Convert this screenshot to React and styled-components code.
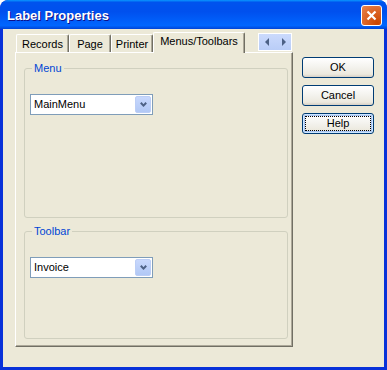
import React from "react";
import styled, { createGlobalStyle } from "styled-components";

const Global = createGlobalStyle`
  html, body { margin: 0; padding: 0; background: #ffffff; }
  body { font-family: "Liberation Sans", Arial, sans-serif; font-size: 11px; }
`;

const Window = styled.div`
  width: 387px;
  height: 370px;
  box-sizing: border-box;
  display: flex;
  flex-direction: column;
  background: #0831d9;
  border-radius: 8px 8px 0 0;
  overflow: hidden;
`;

const TitleBar = styled.div`
  height: 29px;
  flex: none;
  display: flex;
  align-items: center;
  padding: 1px 5px 0 7px;
  box-sizing: border-box;
  background: linear-gradient(
    to bottom,
    #0997ff 0%,
    #0053ee 8%,
    #0050ee 40%,
    #0066ff 88%,
    #0044d6 100%
  );
  border-radius: 8px 8px 0 0;
`;

const Title = styled.div`
  flex: 1;
  color: #ffffff;
  font-family: "Liberation Sans", Arial, sans-serif;
  font-weight: bold;
  font-size: 13px;
  text-shadow: 1px 1px #0f1089;
`;

const CloseButton = styled.div`
  width: 21px;
  height: 21px;
  box-sizing: border-box;
  margin-top: 1px;
  border: 1px solid #ffffff;
  border-radius: 3px;
  background: radial-gradient(circle at 80% 90%, #cc4600 0%, #dc6527 55%, #e8854f 100%);
  display: flex;
  align-items: center;
  justify-content: center;
`;

const Body = styled.div`
  flex: 1;
  margin: 0 3px 3px 3px;
  background: #ece9d8;
  display: flex;
  align-items: flex-start;
  padding: 3px 0 0 12px;
`;

const TabControl = styled.div`
  width: 278px;
  display: flex;
  flex-direction: column;
`;

const TabStrip = styled.div`
  height: 20px;
  display: flex;
  align-items: flex-end;
  padding-left: 1px;
`;

const Tab = styled.div`
  position: relative;
  box-sizing: border-box;
  width: ${(p) => p.$w}px;
  height: ${(p) => (p.$active ? 21 : 18)}px;
  margin-bottom: ${(p) => (p.$active ? -1 : 0)}px;
  z-index: ${(p) => (p.$active ? 2 : 1)};
  padding-top: ${(p) => (p.$active ? 2 : 3)}px;
  text-align: center;
  line-height: 13px;
  color: #000;
  background: #ece9d8;
  border-top: 1px solid #ffffff;
  border-left: 1px solid #ffffff;
  border-right: 1px solid #716f64;
  box-shadow: inset -1px 0 #aca899;
  border-radius: 2px 2px 0 0;
  white-space: nowrap;
`;

const ArrowBox = styled.div`
  margin-left: auto;
  margin-right: 1px;
  align-self: flex-start;
  margin-top: 1px;
  width: 34px;
  height: 18px;
  box-sizing: border-box;
  border: 1px solid #ffffff;
  display: flex;
`;

const ArrowHalf = styled.div`
  flex: 1;
  background: linear-gradient(to bottom, #cbdafc, #b9cdf7);
  display: flex;
  align-items: center;
  justify-content: center;
`;

const Panel = styled.div`
  position: relative;
  z-index: 1;
  height: 295px;
  box-sizing: border-box;
  background: #ece9d8;
  border-top: 1px solid #ffffff;
  border-left: 1px solid #ffffff;
  border-right: 1px solid #716f64;
  border-bottom: 1px solid #716f64;
  box-shadow: inset -1px -1px #aca899;
  padding: 15px 4px 0 8px;
  display: flex;
  flex-direction: column;
  gap: 13px;
`;

const GroupBox = styled.div`
  position: relative;
  height: ${(p) => p.$h}px;
  box-sizing: border-box;
  border: 1px solid #d0d0bf;
  border-radius: 3px;
  padding: 25px 0 0 5px;
`;

const GroupLabel = styled.span`
  position: absolute;
  top: -7px;
  left: 7px;
  padding: 0 2px;
  line-height: 13px;
  color: #0046d5;
  background: #ece9d8;
`;

const Combo = styled.div`
  width: 123px;
  height: 21px;
  box-sizing: border-box;
  border: 1px solid #7f9db9;
  background: #ffffff;
  display: flex;
  align-items: center;
  padding: 1px 1px 1px 3px;
`;

const ComboText = styled.span`
  flex: 1;
  color: #000;
  line-height: 13px;
`;

const ComboButton = styled.div`
  width: 16px;
  height: 17px;
  box-sizing: border-box;
  border: 1px solid #bccef6;
  border-radius: 2px;
  background: linear-gradient(to bottom, #c8d8fd, #b1c8f5);
  display: flex;
  align-items: center;
  justify-content: center;
`;

const Buttons = styled.div`
  margin-left: 9px;
  margin-top: 25px;
  display: flex;
  flex-direction: column;
  gap: 7px;
`;

const Button = styled.div`
  position: relative;
  width: 72px;
  height: 21px;
  box-sizing: border-box;
  border: 1px solid #003c74;
  border-radius: 3px;
  background: linear-gradient(to bottom, #ffffff 0%, #f3f2ed 50%, #ece9de 85%, #d6d0c5 100%);
  display: flex;
  align-items: center;
  justify-content: center;
  color: #000;
  line-height: 13px;
  box-shadow: ${(p) => (p.$focus ? "inset 0 0 0 1px #cee7ff, inset 0 0 0 2px #a9c5f2" : "none")};
  &::after {
    content: "";
    display: ${(p) => (p.$focus ? "block" : "none")};
    position: absolute;
    inset: 2px;
    border: 1px dotted #000;
  }
`;

const Chevron = () => (
  <svg width="7" height="5" viewBox="0 0 7 5">
    <path d="M0.8 0.8 L3.5 3.6 L6.2 0.8" fill="none" stroke="#4d6185" strokeWidth="2" />
  </svg>
);

const tabs = [
  { label: "Records", w: 53 },
  { label: "Page", w: 42 },
  { label: "Printer", w: 42 },
  { label: "Menus/Toolbars", w: 92, active: true },
];

export default function App() {
  return (
    <>
      <Global />
      <Window>
        <TitleBar>
          <Title>Label Properties</Title>
          <CloseButton>
            <svg width="11" height="11" viewBox="0 0 11 11">
              <path d="M1.5 1.5 L9.5 9.5 M9.5 1.5 L1.5 9.5" stroke="#ffffff" strokeWidth="2.2" />
            </svg>
          </CloseButton>
        </TitleBar>
        <Body>
          <TabControl>
            <TabStrip>
              {tabs.map((t) => (
                <Tab key={t.label} $w={t.w} $active={t.active}>
                  {t.label}
                </Tab>
              ))}
              <ArrowBox>
                <ArrowHalf>
                  <svg width="5" height="8" viewBox="0 0 5 8">
                    <path d="M4 0 L0 4 L4 8 Z" fill="#4d6185" />
                  </svg>
                </ArrowHalf>
                <ArrowHalf>
                  <svg width="5" height="8" viewBox="0 0 5 8">
                    <path d="M1 0 L5 4 L1 8 Z" fill="#4d6185" />
                  </svg>
                </ArrowHalf>
              </ArrowBox>
            </TabStrip>
            <Panel>
              <GroupBox $h={150}>
                <GroupLabel>Menu</GroupLabel>
                <Combo>
                  <ComboText>MainMenu</ComboText>
                  <ComboButton>
                    <Chevron />
                  </ComboButton>
                </Combo>
              </GroupBox>
              <GroupBox $h={108}>
                <GroupLabel>Toolbar</GroupLabel>
                <Combo>
                  <ComboText>Invoice</ComboText>
                  <ComboButton>
                    <Chevron />
                  </ComboButton>
                </Combo>
              </GroupBox>
            </Panel>
          </TabControl>
          <Buttons>
            <Button>OK</Button>
            <Button>Cancel</Button>
            <Button $focus>Help</Button>
          </Buttons>
        </Body>
      </Window>
    </>
  );
}
